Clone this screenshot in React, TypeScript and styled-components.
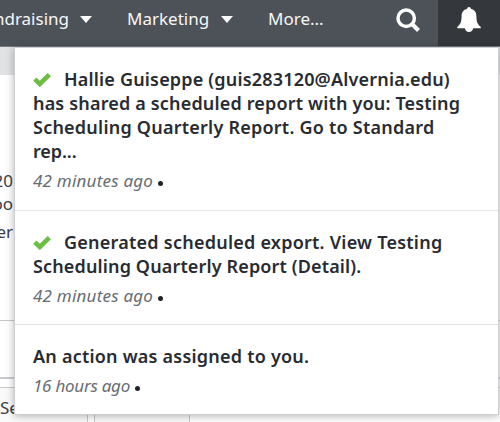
import React from "react";
import styled, { createGlobalStyle } from "styled-components";

const GlobalStyle = createGlobalStyle`
  * { box-sizing: border-box; }
  body { margin: 0; background: #fff; overflow: hidden; font-family: "Noto Sans", "Open Sans", sans-serif; }
`;

const Page = styled.div`
  position: relative;
  width: 500px;
  height: 422px;
  overflow: hidden;
  background: #fff;
`;

const NavBar = styled.nav`
  display: flex;
  align-items: stretch;
  height: 47px;
  background: #4d5259;
  border-bottom: 1px solid #767a80;
  color: #f7f7f8;
  font-size: 17px;
  line-height: 24px;
  white-space: nowrap;
`;

const NavItem = styled.div<{ $width: number; $pad?: number; $spacing?: number }>`
  display: flex;
  flex: none;
  align-items: center;
  justify-content: space-between;
  width: ${(p) => p.$width}px;
  margin-left: ${(p) => p.$pad ?? 0}px;
  padding-bottom: 8px;
  letter-spacing: ${(p) => p.$spacing ?? 0}px;
`;

const Clip = styled.span`
  display: flex;
  justify-content: flex-end;
  width: 69px;
  overflow: hidden;
`;

const Caret = styled.i`
  border: 6px solid transparent;
  border-top: 7px solid #fff;
  border-bottom: 0;
`;

const IconButton = styled.div<{ $active?: boolean; $width: number; $pad?: number }>`
  display: flex;
  flex: none;
  align-items: center;
  justify-content: center;
  width: ${(p) => p.$width}px;
  margin-left: ${(p) => p.$pad ?? 0}px;
  padding-bottom: 6px;
  background: ${(p) => (p.$active ? "#34373c" : "transparent")};
`;

const Background = styled.main`
  height: 375px;
  color: #3a3d42;
  font-size: 17px;
  line-height: 24px;
  white-space: nowrap;
`;

const Band = styled.div`
  height: 28px;
  background: #e1e2e4;
`;

const Snippets = styled.div`
  display: flex;
  flex-direction: column;
  align-items: flex-end;
  width: 13px;
  height: 245px;
  padding-top: 93px;
  line-height: 26px;
  span:nth-child(2) { margin-top: -3px; }
  span:nth-child(3) { margin-top: 2px; }
`;

const Rule = styled.div<{ $gap: number; $strong?: boolean }>`
  height: ${(p) => (p.$strong ? 2 : 1)}px;
  margin-bottom: ${(p) => p.$gap}px;
  background: #c8c9cd;
`;

const Cells = styled.div`
  display: flex;
  height: 36px;
  border-top: 1px solid #c8c9cd;
`;

const Cell = styled.div<{ $width: number; $gap?: number }>`
  width: ${(p) => p.$width}px;
  margin-left: ${(p) => p.$gap ?? 0}px;
  padding-top: 8px;
  border: solid #c8c9cd;
  border-width: 0 1px 0 ${(p) => (p.$gap ? 1 : 0)}px;
  background: #fafafb;
`;

const Panel = styled.section`
  position: absolute;
  top: 47px;
  left: 14px;
  width: 485px;
  height: 368px;
  background: #fff;
  border: 1px solid #cdcfd2;
  box-shadow: 0 1px 8px rgba(0, 0, 0, 0.3);
`;

const Item = styled.article<{ $height: number }>`
  height: ${(p) => p.$height}px;
  padding: 19px 18px 0;
  border-bottom: 1px solid #e4e5e8;
  &:last-child { border-bottom: 0; }
`;

const Line = styled.div<{ $spacing: number }>`
  display: flex;
  align-items: center;
  height: 24px;
  color: #282b31;
  font-size: 18px;
  font-weight: 600;
  line-height: 24px;
  white-space: nowrap;
  letter-spacing: ${(p) => p.$spacing}px;
  svg { flex: none; margin-right: 13px; }
`;

const Meta = styled.div<{ $spacing: number }>`
  display: flex;
  align-items: center;
  height: 24px;
  margin-top: 6px;
  color: #686c73;
  font-size: 17px;
  font-style: italic;
  line-height: 24px;
  letter-spacing: ${(p) => p.$spacing}px;
`;

const Dot = styled.i`
  width: 5px;
  height: 5px;
  margin: 5px 0 0 5px;
  border-radius: 50%;
  background: #212327;
`;

const Check = () => (
  <svg width="18" height="15" viewBox="0 0 18 15">
    <path d="M1.800 7.200 6.800 12 16.300 2.600" fill="none" stroke="#6dbd45" strokeWidth="4.600" />
  </svg>
);

const SearchIcon = () => (
  <svg width="24" height="24" viewBox="0 0 24 24" fill="none" stroke="#fff">
    <circle cx="10.2" cy="10.3" r="8.2" strokeWidth="3.5" />
    <path d="m16 16 6.5 6.5" strokeWidth="4" />
  </svg>
);

const BellIcon = () => (
  <svg width="24" height="26" viewBox="0 0 24 26" fill="#fff">
    <path d="M12 0c1.1 0 1.8.8 1.8 1.8 3.6.8 5.6 3.6 5.6 7.4 0 6 1.4 8.3 4.3 10.5v1.5H.3v-1.5c2.9-2.2 4.3-4.5 4.3-10.5 0-3.8 2-6.6 5.6-7.4C10.2.8 10.9 0 12 0Z" />
    <path d="M7.8 21h8.4c-.4 2.5-2 4-4.2 4s-3.8-1.500-4.200-4Z" />
  </svg>
);

type Notice = { lines: [string, number][]; time: string; timeSpacing: number; done?: boolean; height: number };

const notices: Notice[] = [
  {
    lines: [
      ["Hallie Guiseppe (guis283120@Alvernia.edu)", 0.18],
      ["has shared a scheduled report with you: Testing", 0.17],
      ["Scheduling Quarterly Report. Go to Standard", 0.23],
      ["rep...", -0.1],
    ],
    time: "42 minutes ago",
    timeSpacing: 0.22,
    done: true,
    height: 163,
  },
  {
    lines: [
      ["Generated scheduled export. View Testing", 0.24],
      ["Scheduling Quarterly Report (Detail).", 0.14],
    ],
    time: "42 minutes ago",
    timeSpacing: 0.22,
    done: true,
    height: 114,
  },
  {
    lines: [["An action was assigned to you.", 0.22]],
    time: "16 hours ago",
    timeSpacing: -0.25,
    height: 89,
  },
];

export default function App() {
  return (
    <Page>
      <GlobalStyle />
      <NavBar>
        <NavItem $width={92}><Clip><span>Fundraising</span></Clip><Caret /></NavItem>
        <NavItem $width={106} $pad={35}><span>Marketing</span><Caret /></NavItem>
        <NavItem $width={54} $pad={35}>More...</NavItem>
        <IconButton $width={60} $pad={56}><SearchIcon /></IconButton>
        <IconButton $active $width={62}><BellIcon /></IconButton>
      </NavBar>
      <Background>
        <Band />
        <Snippets><span>20</span><span>oo</span><span>er</span></Snippets>
        <Rule $gap={56} />
        <Rule $gap={8} $strong />
        <Cells>
          <Cell $width={88}>Se</Cell>
          <Cell $width={96} $gap={6} />
        </Cells>
      </Background>
      <Panel>
        {notices.map((n, i) => (
          <Item key={i} $height={n.height}>
            {n.lines.map(([text, spacing], j) => (
              <Line key={text} $spacing={spacing}>
                {n.done && j === 0 && <Check />}
                {text}
              </Line>
            ))}
            <Meta $spacing={n.timeSpacing}>{n.time}<Dot /></Meta>
          </Item>
        ))}
      </Panel>
    </Page>
  );
}
